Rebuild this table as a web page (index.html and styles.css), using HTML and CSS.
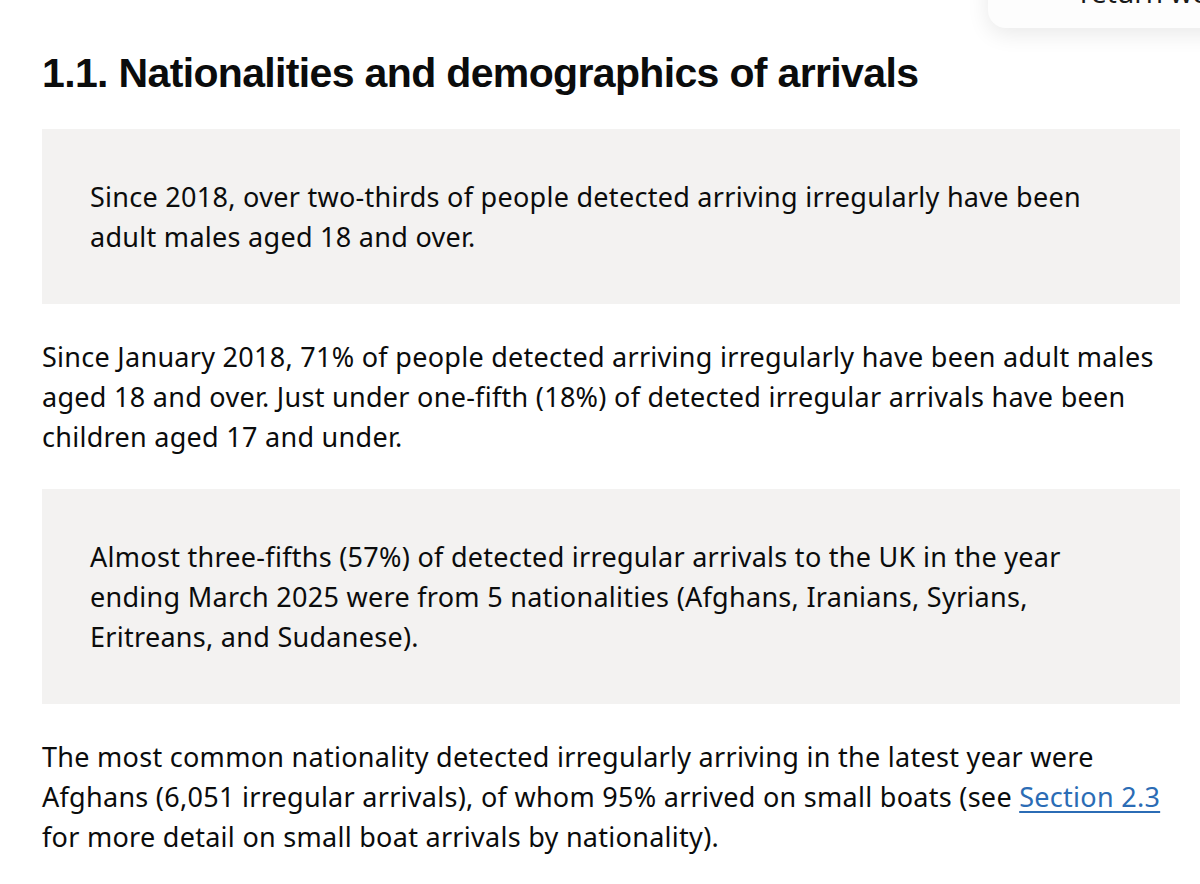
FILE: index.html
```html
<!DOCTYPE html>
<html lang="en">
<head>
<meta charset="utf-8">
<title>Nationalities and demographics of arrivals</title>
<link rel="stylesheet" href="styles.css">
</head>
<body>
<div class="popup"><span class="popup-text">return we ve</span></div>
<main class="content">
  <h2 class="heading">1.1. Nationalities and demographics of arrivals</h2>
  <div class="callout">
    <p>Since 2018, over two-thirds of people detected arriving irregularly have been adult males aged 18 and over.</p>
  </div>
  <p class="body">Since January 2018, 71% of people detected arriving irregularly have been adult males aged 18 and over. Just under one-fifth (18%) of detected irregular arrivals have been children aged 17 and under.</p>
  <div class="callout">
    <p>Almost three-fifths (57%) of detected irregular arrivals to the UK in the year ending March 2025 were from 5 nationalities (Afghans, Iranians, Syrians, Eritreans, and Sudanese).</p>
  </div>
  <p class="body">The most common nationality detected irregularly arriving in the latest year were Afghans (6,051 irregular arrivals), of whom 95% arrived on small boats (see <a class="link" href="#">Section 2.3</a> for more detail on small boat arrivals by nationality).</p>
</main>
</body>
</html>
```

FILE: styles.css
```css
html, body {
  margin: 0;
  padding: 0;
  background: #ffffff;
}
body {
  font-family: "Noto Sans", "Liberation Sans", Arial, sans-serif;
  color: #0b0c0c;
  overflow: hidden;
}
.content {
  padding: 0 20px 0 42px;
}
.heading {
  font-family: "Liberation Sans", Arial, sans-serif;
  margin: 48px 0 1px;
  font-size: 41px;
  line-height: 50px;
  height: 80px;
  font-weight: 700;
  letter-spacing: -0.65px;
}
.callout {
  background: #f3f2f1;
  padding: 48px 48px 47px 48px;
}
.callout p,
.body {
  margin: 0;
  font-size: 27px;
  line-height: 40px;
  letter-spacing: 0.28px;
}
.body {
  margin: 33px 0 32px;
}
.link {
  color: #2b6cb5;
  text-decoration: underline;
  text-decoration-thickness: 2px;
  text-underline-offset: 4px;
}
.popup {
  position: absolute;
  top: -40px;
  left: 988px;
  width: 260px;
  height: 68px;
  background: #fdfdfd;
  border-radius: 18px;
  box-shadow: 0 6px 22px rgba(0, 0, 0, 0.09);
  overflow: hidden;
}
.popup-text {
  position: absolute;
  left: 92px;
  top: 16px;
  font-size: 28px;
  line-height: 32px;
  color: #1a1a1a;
  white-space: nowrap;
}
```
